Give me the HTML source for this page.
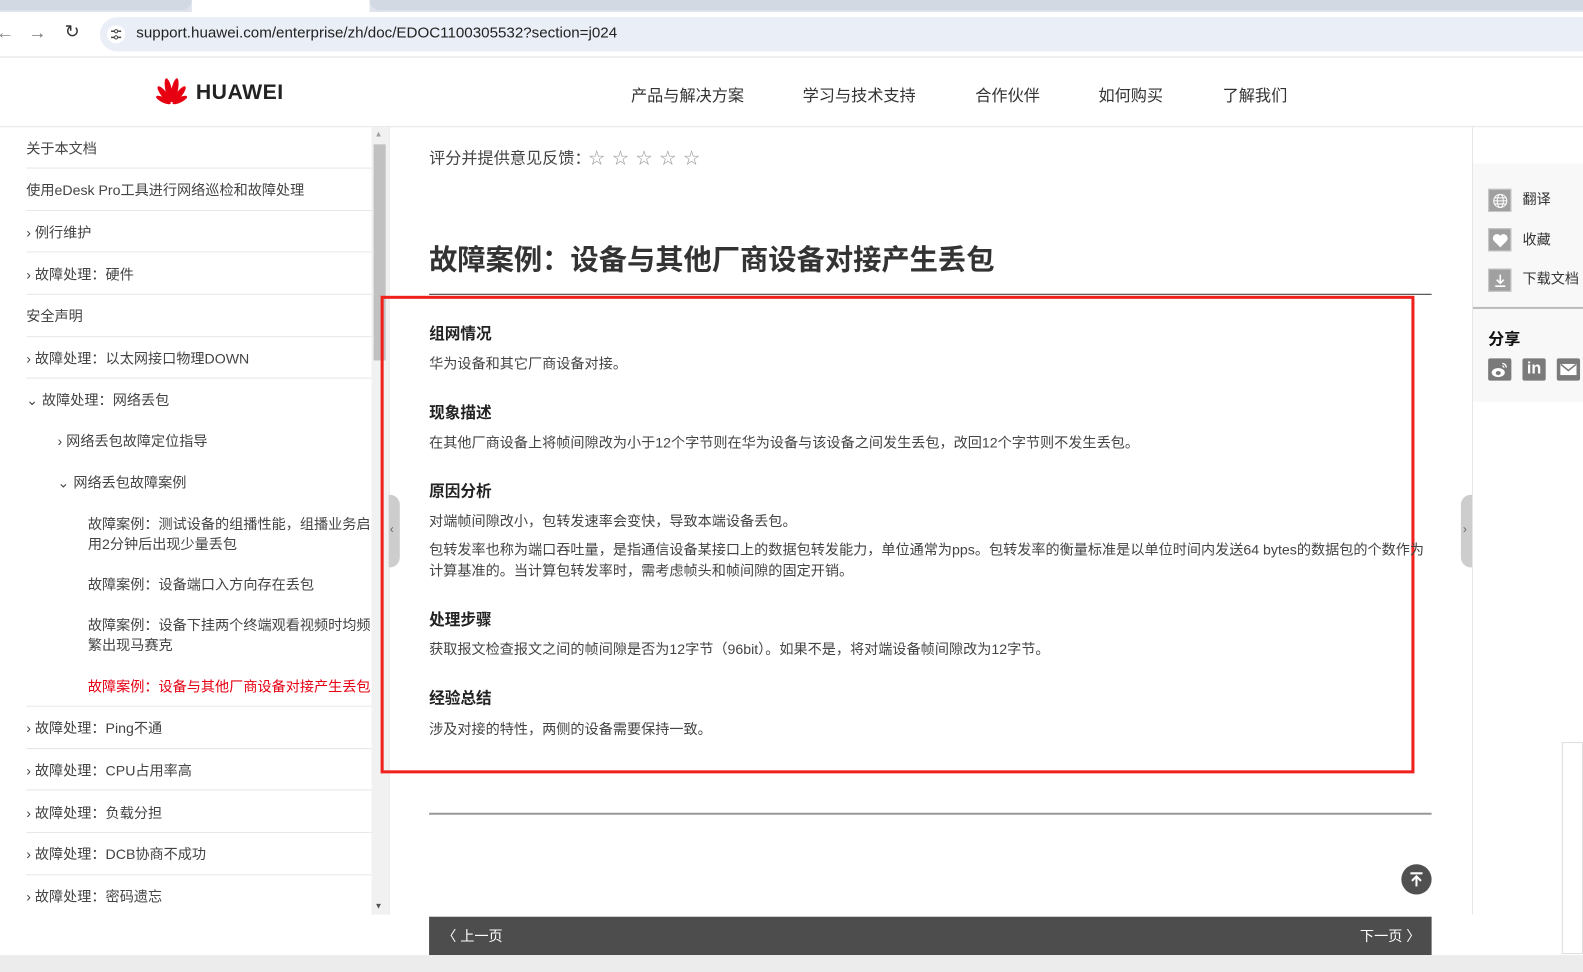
<!DOCTYPE html>
<html><head><meta charset="utf-8"><style>
*{margin:0;padding:0;box-sizing:border-box}
body{width:1583px;height:963px;overflow:hidden;background:#fff;font-family:"Liberation Sans","Noto Sans CJK SC",sans-serif;color:#333;position:relative}
#w{position:absolute;left:0;top:0;width:1568px;height:954px;transform:scale(1.0096);transform-origin:0 0}
.a{position:absolute;white-space:nowrap}
.nav{font-size:16px;color:#333;top:81px}
.sb{font-size:14px;color:#444;line-height:20px}
.dv{position:absolute;left:26px;width:342px;height:1px;background:#e6e6e6}
.h{font-size:15.5px;font-weight:bold;color:#222;left:425px}
.p{font-size:14px;color:#444;left:425px;line-height:21px}
.ic{position:absolute;left:1474px;width:23px;height:23px;background:#a0a0a0;border:1px solid #c8c8c8}
</style></head><body><div id="w">
<div class="a" style="left:0;top:0;width:1568px;height:12px;background:#dfe3eb"></div>
<div class="a" style="left:0;top:0;width:190px;height:10px;background:#d3d9e3;border-radius:0 0 10px 0"></div>
<div class="a" style="left:190px;top:0;width:176px;height:12px;background:#fff"></div>
<div class="a" style="left:366px;top:0;width:1217px;height:10px;background:#d3d9e3;border-radius:0 0 0 10px"></div>
<div class="a" style="left:0;top:12px;width:1568px;height:45px;background:#fff;border-bottom:1px solid #e0e0e0"></div>
<div class="a" style="left:-4px;top:22px;font-size:18px;color:#888">←</div>
<div class="a" style="left:28px;top:22px;font-size:18px;color:#777">→</div>
<div class="a" style="left:64px;top:21px;font-size:18px;color:#333">↻</div>
<div class="a" style="left:99px;top:17px;width:1490px;height:34px;background:#eaeef6;border-radius:17px"></div>
<svg class="a" style="left:106px;top:25px" width="18" height="18" viewBox="0 0 18 18"><circle cx="9" cy="9" r="9" fill="#fff"/><path d="M4 6h3M11 6h3M4 12h3M11 12h3" stroke="#444" stroke-width="1.5"/><circle cx="9" cy="6" r="1.6" fill="none" stroke="#444"/><circle cx="9" cy="12" r="1.6" fill="none" stroke="#444"/></svg>
<div class="a" style="left:135px;top:24px;font-size:15px;color:#222">support.huawei.com/enterprise/zh/doc/EDOC1100305532?section=j024</div>
<div class="a" style="left:0;top:125px;width:1568px;height:1px;background:#e5e5e5"></div>
<svg class="a" style="left:150px;top:75px" width="40" height="30" viewBox="0 0 40 30">
<g fill="#e60012">
<ellipse cx="20" cy="14" rx="3.2" ry="12" transform="rotate(-12 20 28)"/>
<ellipse cx="20" cy="14" rx="3.2" ry="12" transform="rotate(12 20 28)"/>
<ellipse cx="20" cy="16" rx="3" ry="10" transform="rotate(-38 20 28)"/>
<ellipse cx="20" cy="16" rx="3" ry="10" transform="rotate(38 20 28)"/>
<ellipse cx="20" cy="19" rx="2.6" ry="8" transform="rotate(-64 20 28)"/>
<ellipse cx="20" cy="19" rx="2.6" ry="8" transform="rotate(64 20 28)"/>
</g></svg>
<div class="a" style="left:194px;top:80px;font-size:21px;font-weight:bold;color:#222;letter-spacing:0.5px">HUAWEI</div>
<div class="a nav" style="left:625px">产品与解决方案</div>
<div class="a nav" style="left:795px">学习与技术支持</div>
<div class="a nav" style="left:966px">合作伙伴</div>
<div class="a nav" style="left:1088px">如何购买</div>
<div class="a nav" style="left:1211px">了解我们</div>
<div class="a sb" style="left:26px;top:137px">关于本文档</div><div class="dv" style="top:166px"></div>
<div class="a sb" style="left:26px;top:178px">使用eDesk Pro工具进行网络巡检和故障处理</div><div class="dv" style="top:208px"></div>
<div class="a sb" style="left:26px;top:220px">› 例行维护</div><div class="dv" style="top:249px"></div>
<div class="a sb" style="left:26px;top:262px">› 故障处理：硬件</div><div class="dv" style="top:291px"></div>
<div class="a sb" style="left:26px;top:303px">安全声明</div><div class="dv" style="top:333px"></div>
<div class="a sb" style="left:26px;top:345px">› 故障处理：以太网接口物理DOWN</div><div class="dv" style="top:374px"></div>
<div class="a sb" style="left:26px;top:386px">⌄ 故障处理：网络丢包</div>
<div class="a sb" style="left:57px;top:427px">› 网络丢包故障定位指导</div>
<div class="a sb" style="left:57px;top:468px">⌄ 网络丢包故障案例</div>
<div class="a sb" style="left:87px;top:509px">故障案例：测试设备的组播性能，组播业务启<br>用2分钟后出现少量丢包</div>
<div class="a sb" style="left:87px;top:569px">故障案例：设备端口入方向存在丢包</div>
<div class="a sb" style="left:87px;top:609px">故障案例：设备下挂两个终端观看视频时均频<br>繁出现马赛克</div>
<div class="a sb" style="left:87px;top:670px;color:#e60012">故障案例：设备与其他厂商设备对接产生丢包</div><div class="dv" style="top:699px"></div>
<div class="a sb" style="left:26px;top:711px">› 故障处理：Ping不通</div><div class="dv" style="top:741px"></div>
<div class="a sb" style="left:26px;top:753px">› 故障处理：CPU占用率高</div><div class="dv" style="top:782px"></div>
<div class="a sb" style="left:26px;top:795px">› 故障处理：负载分担</div><div class="dv" style="top:824px"></div>
<div class="a sb" style="left:26px;top:836px">› 故障处理：DCB协商不成功</div><div class="dv" style="top:866px"></div>
<div class="a sb" style="left:26px;top:878px">› 故障处理：密码遗忘</div>
<div class="a" style="left:368px;top:126px;width:17px;height:780px;background:#f1f1f1"></div>
<div class="a" style="left:370px;top:143px;width:12px;height:214px;background:#c1c1c1"></div>
<div class="a" style="left:371px;top:128px;font-size:8px;color:#a0a0a0">▲</div>
<div class="a" style="left:371px;top:893px;font-size:8px;color:#505050">▼</div>
<div class="a" style="left:385px;top:126px;width:1px;height:780px;background:#e6e6e6"></div>
<div class="a" style="left:385px;top:490px;width:11px;height:72px;background:#cdcdcd;border-radius:0 10px 10px 0"></div>
<div class="a" style="left:386px;top:517px;font-size:12px;color:#666">‹</div>
<div class="a" style="left:425px;top:143px;font-size:16px;color:#444">评分并提供意见反馈：</div>
<div class="a" style="left:583px;top:143px;font-size:16px;color:#999;letter-spacing:7.5px">☆☆☆☆☆</div>
<div class="a" style="left:425px;top:236px;font-size:28px;font-weight:bold;color:#333">故障案例：设备与其他厂商设备对接产生丢包</div>
<div class="a" style="left:425px;top:291px;width:993px;height:1px;background:#333"></div>
<div class="a" style="left:377px;top:293px;width:1024px;height:473px;border:3px solid #f0201c"></div>
<div class="a h" style="top:319px">组网情况</div>
<div class="a p" style="top:350px">华为设备和其它厂商设备对接。</div>
<div class="a h" style="top:397px">现象描述</div>
<div class="a p" style="top:428px">在其他厂商设备上将帧间隙改为小于12个字节则在华为设备与该设备之间发生丢包，改回12个字节则不发生丢包。</div>
<div class="a h" style="top:475px">原因分析</div>
<div class="a p" style="top:506px">对端帧间隙改小，包转发速率会变快，导致本端设备丢包。</div>
<div class="a p" style="top:534px">包转发率也称为端口吞吐量，是指通信设备某接口上的数据包转发能力，单位通常为pps。包转发率的衡量标准是以单位时间内发送64 bytes的数据包的个数作为<br>计算基准的。当计算包转发率时，需考虑帧头和帧间隙的固定开销。</div>
<div class="a h" style="top:602px">处理步骤</div>
<div class="a p" style="top:633px">获取报文检查报文之间的帧间隙是否为12字节（96bit）。如果不是，将对端设备帧间隙改为12字节。</div>
<div class="a h" style="top:680px">经验总结</div>
<div class="a p" style="top:712px">涉及对接的特性，两侧的设备需要保持一致。</div>
<div class="a" style="left:425px;top:805px;width:993px;height:2px;background:#999"></div>
<div class="a" style="left:1388px;top:856px;width:30px;height:30px;border-radius:50%;background:#505050"></div>
<svg class="a" style="left:1388px;top:856px" width="30" height="30"><path d="M9 9h12M15 22V12M10.5 16.5L15 12l4.5 4.5" stroke="#fff" stroke-width="2" fill="none"/></svg>
<div class="a" style="left:425px;top:908px;width:993px;height:38px;background:#4d4d4d"></div>
<div class="a" style="left:438px;top:917px;font-size:14px;color:#fff">〈 上一页</div>
<div class="a" style="left:1347px;top:917px;font-size:14px;color:#fff">下一页 〉</div>
<div class="a" style="left:1458px;top:126px;width:1px;height:780px;background:#e6e6e6"></div>
<div class="a" style="left:1447px;top:490px;width:11px;height:72px;background:#cdcdcd;border-radius:10px 0 0 10px"></div>
<div class="a" style="left:1449px;top:517px;font-size:12px;color:#666">›</div>
<div class="a" style="left:1459px;top:162px;width:124px;height:236px;background:#f8f8f8"></div>
<div class="a" style="left:1459px;top:304px;width:124px;height:2px;background:#bbb"></div>
<div class="ic" style="top:187px"></div>
<svg class="a" style="left:1478px;top:191px" width="16" height="16" viewBox="0 0 16 16" fill="none" stroke="#fff" stroke-width="1"><circle cx="8" cy="8" r="6.5"/><ellipse cx="8" cy="8" rx="3" ry="6.5"/><path d="M1.5 8h13M2.5 5h11M2.5 11h11"/></svg>
<div class="a" style="left:1508px;top:187px;font-size:14px;color:#333">翻译</div>
<div class="ic" style="top:226px"></div>
<svg class="a" style="left:1477px;top:229px" width="18" height="18" viewBox="0 0 18 18"><path d="M9 16L2.5 9.5A3.8 3.8 0 0 1 9 4.5a3.8 3.8 0 0 1 6.5 5z" fill="#fff"/></svg>
<div class="a" style="left:1508px;top:227px;font-size:14px;color:#333">收藏</div>
<div class="ic" style="top:266px"></div>
<svg class="a" style="left:1478px;top:270px" width="16" height="16"><path d="M8 2v8M4.5 7L8 10.5 11.5 7M3 13.5h10" stroke="#fff" stroke-width="1.6" fill="none"/></svg>
<div class="a" style="left:1508px;top:266px;font-size:14px;color:#333">下载文档</div>
<div class="a" style="left:1474px;top:322px;font-size:16px;font-weight:bold;color:#111">分享</div>
<div class="a" style="left:1474px;top:355px;width:23px;height:22px;background:#7a7a7a;border-radius:2px"></div>
<svg class="a" style="left:1476px;top:357px" width="19" height="18"><ellipse cx="8" cy="12" rx="6.5" ry="4.5" fill="#fff"/><ellipse cx="8" cy="12.5" rx="2.5" ry="2" fill="#7a7a7a"/><path d="M12 3a4 4 0 0 1 4 4M12 5.5a1.6 1.6 0 0 1 1.6 1.6" stroke="#fff" stroke-width="1.3" fill="none"/></svg>
<div class="a" style="left:1508px;top:355px;width:23px;height:22px;background:#7a7a7a;border-radius:2px;color:#fff;font-weight:bold;font-size:16px;text-align:center;line-height:22px">in</div>
<div class="a" style="left:1542px;top:355px;width:23px;height:22px;background:#7a7a7a;border-radius:2px"></div>
<svg class="a" style="left:1545px;top:360px" width="17" height="12"><rect x="0.5" y="0.5" width="16" height="11" fill="#fff"/><path d="M1 1l7.5 6L16 1" stroke="#7a7a7a" stroke-width="1.5" fill="none"/></svg>
<div class="a" style="left:1547px;top:735px;width:21px;height:210px;border:1px solid #ddd;background:#fff"></div>
<div class="a" style="left:0;top:946px;width:1568px;height:17px;background:#ececec"></div>
</div></body></html>
